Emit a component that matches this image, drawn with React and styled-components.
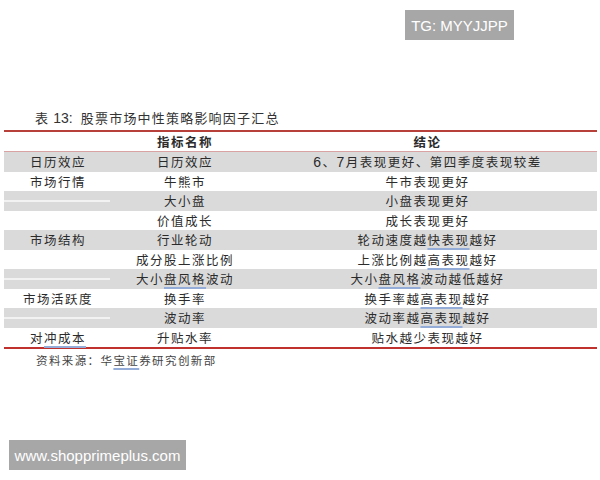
import styled, { createGlobalStyle } from "styled-components";

const GlobalStyle = createGlobalStyle`
  html, body {
    margin: 0;
    padding: 0;
    background: #fff;
  }
  body {
    font-family: "Noto Sans CJK SC", "Liberation Sans", sans-serif;
    color: #2a2a2a;
  }
`;

const Page = styled.div`
  position: relative;
  width: 600px;
  height: 480px;
  overflow: hidden;
  padding-top: 107px;
  box-sizing: border-box;
`;

const Watermark = styled.div`
  position: absolute;
  top: ${(p) => p.$top}px;
  left: ${(p) => p.$left}px;
  width: ${(p) => p.$width}px;
  height: 30px;
  background: #a7a7a7;
  color: #fff;
  font-family: "Liberation Sans", Arial, sans-serif;
  font-size: 15px;
  display: flex;
  align-items: center;
  justify-content: center;
`;

const Title = styled.div`
  padding-left: 35px;
  height: 22px;
  line-height: 22px;
  font-size: 13px;
  letter-spacing: 1.2px;
  color: #333;
  white-space: nowrap;
`;

const Num = styled.span`
  font-family: "Liberation Sans", Arial, sans-serif;
  font-size: 14px;
  margin: 0 4px 0 4px;
  letter-spacing: 0;
`;

const Table = styled.div`
  margin: 1px 3px 0 4px;
  border-top: 2px solid #b8403a;
  border-bottom: 2px solid #c0302c;
`;

const Row = styled.div`
  display: grid;
  grid-template-columns: 108px 146px 1fr;
  height: ${(p) => (p.$head ? "19px" : "19.5px")};
  background: ${(p) => (p.$shade ? "#dadada" : "#fff")};
  border-bottom: ${(p) => (p.$head ? "1px solid #d9a3a3" : "none")};
`;

const Cell = styled.div`
  position: relative;
  display: flex;
  align-items: center;
  justify-content: center;
  font-size: 12.5px;
  letter-spacing: 1.5px;
  font-weight: ${(p) => (p.$bold ? 700 : 400)};
  color: #2b2b2b;
  white-space: nowrap;

  &::after {
    content: "";
    display: ${(p) => (p.$streak ? "block" : "none")};
    position: absolute;
    left: 0;
    width: 106px;
    top: 9px;
    height: 1.5px;
    background: #f2f2f2;
  }
`;

const Mark = styled.span`
  text-decoration: underline;
  text-decoration-color: #93acd8;
  text-decoration-thickness: 1.5px;
  text-underline-offset: 3px;
`;

const Digit = styled.span`
  font-family: "Liberation Sans", Arial, sans-serif;
  font-size: 14px;
`;

const Source = styled.div`
  padding: 3px 0 0 36px;
  font-size: 11.5px;
  letter-spacing: 1.4px;
  color: #444;
`;

const rows = [
  { a: "日历效应", b: "日历效应", c: <><Digit>6</Digit>、<Digit>7</Digit>月表现更好、第四季度表现较差</>, shade: true },
  { a: "市场行情", b: "牛熊市", c: "牛市表现更好" },
  { a: "", b: "大小盘", c: "小盘表现更好", shade: true, streak: true },
  { a: "", b: "价值成长", c: "成长表现更好" },
  { a: "市场结构", b: "行业轮动", c: <>轮动速度越<Mark>快表现</Mark>越好</>, shade: true },
  { a: "", b: "成分股上涨比例", c: <>上涨比例越<Mark>高表现</Mark>越好</> },
  { a: "", b: <>大小<Mark>盘风格</Mark>波动</>, c: <>大小<Mark>盘风格</Mark>波动越低越好</>, shade: true, streak: true },
  { a: "市场活跃度", b: "换手率", c: <>换手率越<Mark>高表现</Mark>越好</> },
  { a: "", b: "波动率", c: <>波动率越<Mark>高表现</Mark>越好</>, shade: true, streak: true },
  { a: <>对<Mark>冲成本</Mark></>, b: "升贴水率", c: "贴水越少表现越好" },
];

export default function App() {
  return (
    <Page>
      <GlobalStyle />
      <Watermark $top={10} $left={405} $width={109}>TG: MYYJJPP</Watermark>
      <Title>
        表<Num>13:</Num> 股票市场中性策略影响因子汇总
      </Title>
      <Table>
        <Row $head>
          <Cell />
          <Cell $bold>指标名称</Cell>
          <Cell $bold>结论</Cell>
        </Row>
        {rows.map((r, i) => (
          <Row key={i} $shade={r.shade}>
            <Cell $streak={r.streak}>{r.a}</Cell>
            <Cell>{r.b}</Cell>
            <Cell>{r.c}</Cell>
          </Row>
        ))}
      </Table>
      <Source>
        资料来源：华<Mark>宝证</Mark>券研究创新部
      </Source>
      <Watermark $top={440} $left={9} $width={177}>www.shopprimeplus.com</Watermark>
    </Page>
  );
}
